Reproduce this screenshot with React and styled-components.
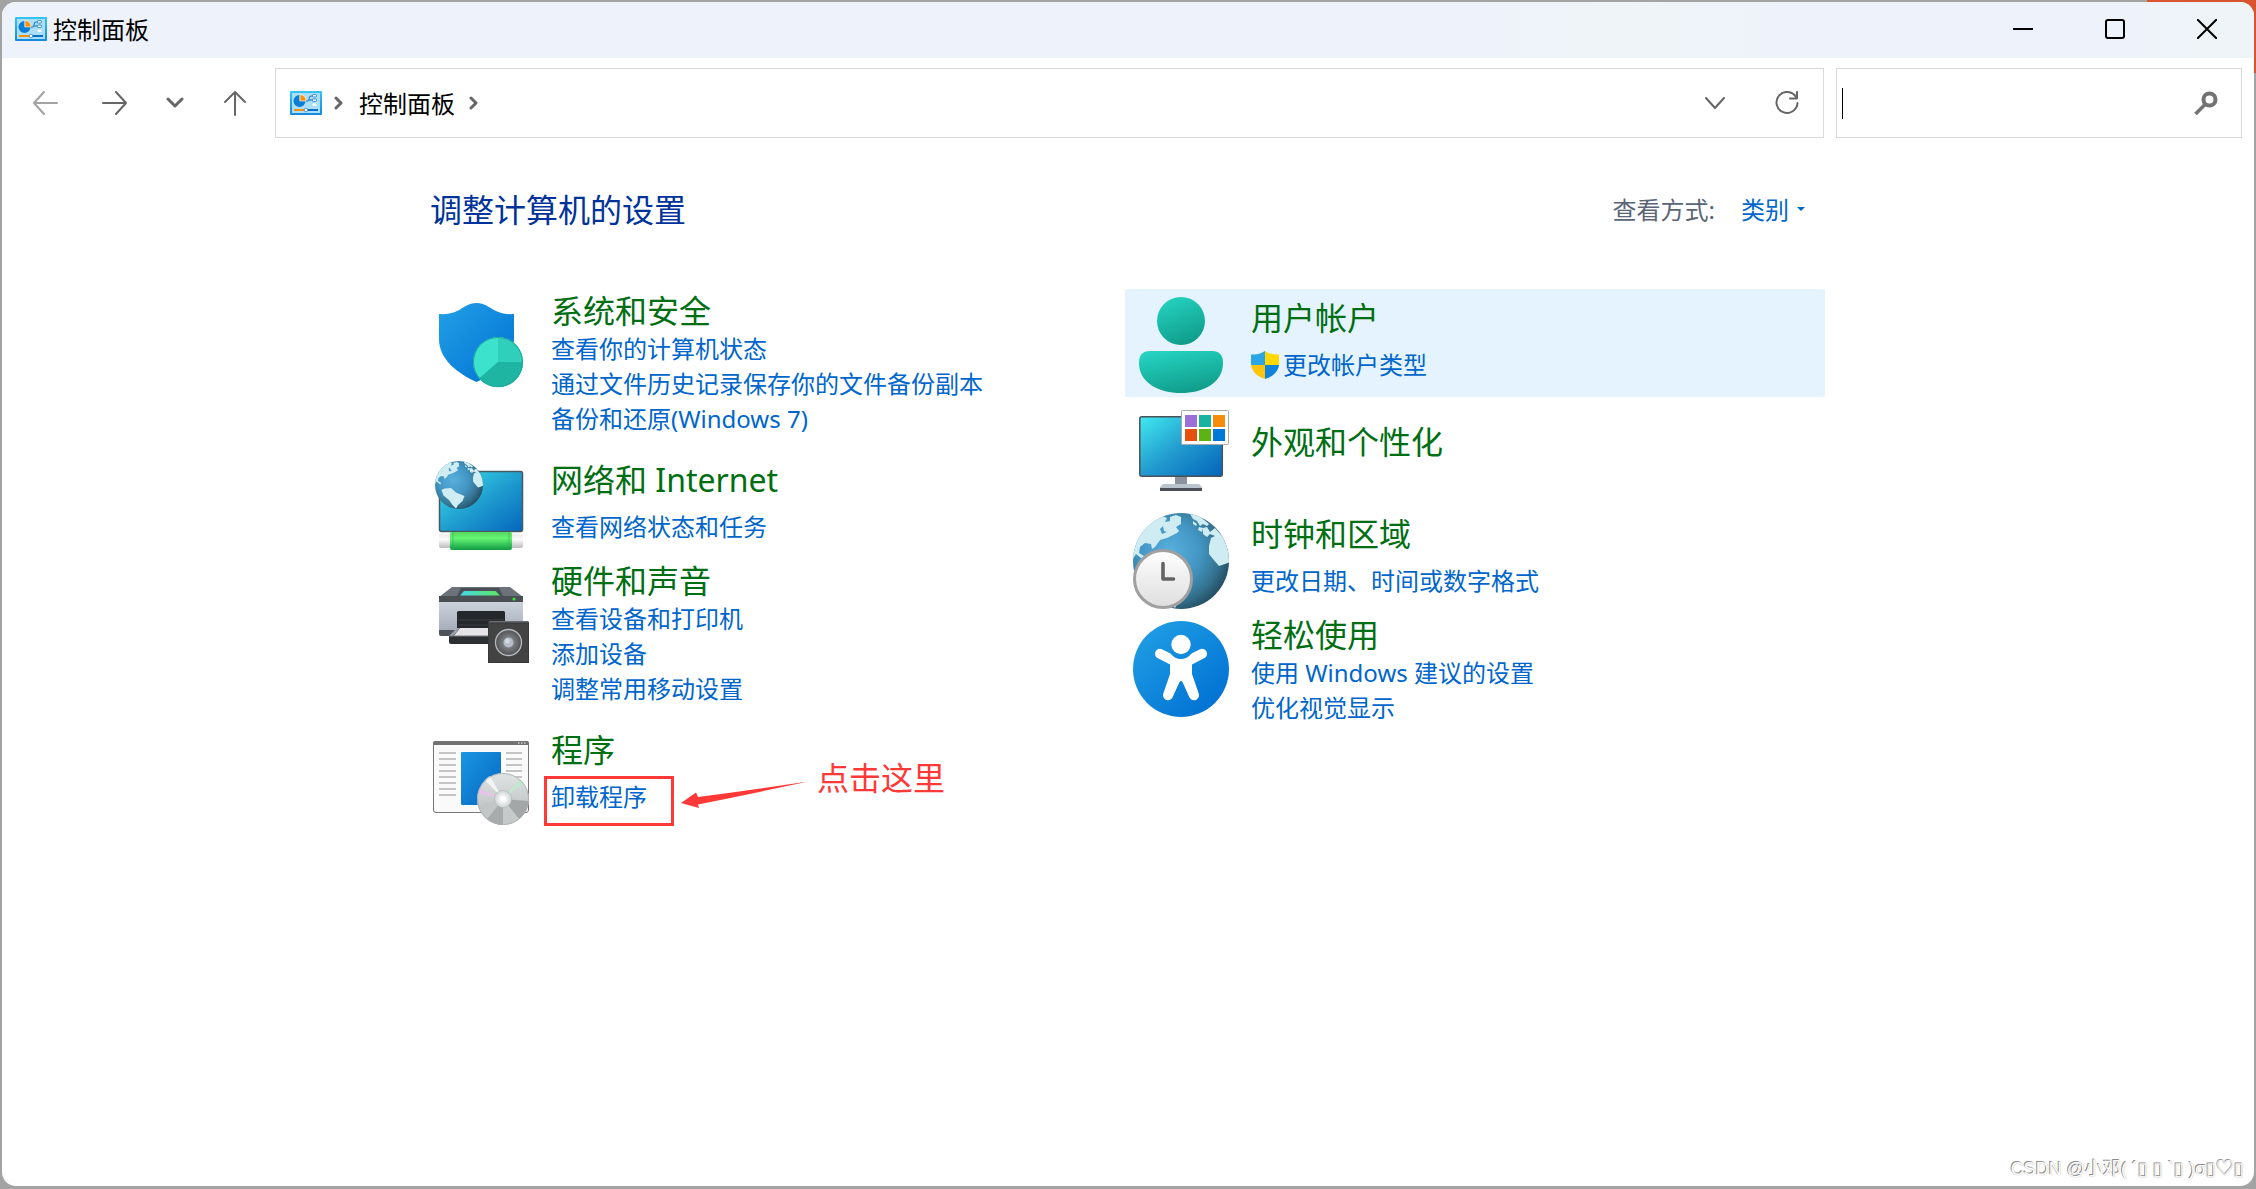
import styled, { createGlobalStyle } from "styled-components";

const GlobalStyle = createGlobalStyle`
  * {
    box-sizing: border-box;
  }

  body {
    margin: 0;
    font-family: "Noto Sans", "Noto Sans CJK SC", sans-serif;
    font-size: 24px;
    line-height: 35px;
    color: #000;
  }

  button,
  input,
  select {
    font: inherit;
    color: inherit;
    border: none;
    background: none;
    padding: 0;
    margin: 0;
    outline: none;
  }

  svg {
    display: block;
    flex: none;
  }
`;

const Desktop = styled.div`
  display: flex;
  min-height: 100vh;
  padding: 2px 2px 3px;
  background:
    linear-gradient(#d9542f, #d9542f) right top / 109px 73px no-repeat,
    #a3a3a3;
`;
const Window = styled.div`
  display: flex;
  flex: 1;
  flex-direction: column;
  overflow: hidden;
  min-width: 0;
  border-radius: 14px;
  background: #fff;
`;
const TitleBar = styled.header`
  display: flex;
  align-items: center;
  height: 56px;
  padding: 0 1px 2px 13px;
  background: linear-gradient(
    90deg,
    #eef3fb 0%,
    #eef3fb 65%,
    #eef4f7 72%,
    #eef3fb 80%,
    #eef3fb 94%,
    #eff4f7 100%
  );
`;
const WindowTitle = styled.h1`
  flex: 1;
  margin: 0 0 0 6px;
  font-size: 24px;
  font-weight: 400;
`;
const ControlButton = styled.button`
  display: flex;
  align-items: center;
  justify-content: center;
  width: 92px;
  height: 100%;
`;

const Toolbar = styled.nav`
  display: flex;
  align-items: stretch;
  padding: 10px 12px 10px 8px;
`;
const NavButton = styled.button`
  display: flex;
  align-items: center;
  justify-content: center;
  width: ${({ $narrow }) => ($narrow ? "50px" : "70px")};
  color: ${({ disabled }) => (disabled ? "#a3a3a3" : "#666")};
`;
const AddressBar = styled.div`
  display: flex;
  flex: 1;
  align-items: center;
  height: 70px;
  min-width: 0;
  margin: 0 12px 0 5px;
  padding-left: 14px;
  border: 1px solid #d9d9d9;
  color: #666;
`;
const AddressButton = styled(NavButton)`
  width: 72px;
  height: 100%;
`;
const Crumb = styled.a`
  margin: 0 14px 0 16px;
  color: #000;
  text-decoration: none;
`;
const CrumbIcon = styled.span`
  margin-right: 12px;
`;
const Spacer = styled.span`
  flex: 1;
`;
const SearchBox = styled.label`
  display: flex;
  align-items: center;
  width: 18vw;
  height: 70px;
  padding: 0 23px 0 5px;
  border: 1px solid #d9d9d9;
  color: #737373;
`;
const Caret = styled.span`
  width: 1px;
  height: 31px;
  background: #000;
`;
const SearchInput = styled.input`
  flex: 1;
  min-width: 0;
`;

const Main = styled.main`
  flex: 1;
  padding: 40px 6px 0 0;
`;
const Content = styled.div`
  max-width: 1400px;
  margin: 0 auto;
`;
const ContentHeader = styled.div`
  display: flex;
  align-items: center;
  justify-content: space-between;
  margin-bottom: 57px;
  padding: 0 20px 0 5px;
`;
const Heading = styled.h2`
  margin: 0;
  font-size: 32px;
  font-weight: 400;
  line-height: 44px;
  color: #003399;
`;
const ViewBy = styled.label`
  display: flex;
  align-items: center;
  padding-bottom: 2px;
  color: #5a6577;
`;
const SelectWrap = styled.span`
  display: flex;
  align-items: center;
  margin-left: 26px;
  color: #0066cc;
`;
const ViewSelect = styled.select`
  appearance: none;
  width: 56px;
  height: 35px;
`;

const Columns = styled.div`
  display: grid;
  grid-template-columns: 1fr 1fr;
`;
const Category = styled.section`
  display: flex;
  align-items: flex-start;
  gap: 22px;
  min-height: 108px;
  padding-left: 8px;
  border-radius: 2px;
  background: ${({ $active }) => ($active ? "#e5f3ff" : "transparent")};
`;
const CategoryIcon = styled.div`
  padding-top: 8px;
`;
const CategoryText = styled.div`
  padding: ${({ $layout }) =>
    ({ dense: "2px 0 15px", single: "9px 0 0", bare: "25px 0 0" })[$layout]};
`;
const CategoryTitle = styled.h3`
  margin: 0 0 ${({ $layout }) => ($layout === "single" ? "9px" : "0")};
  font-size: 32px;
  font-weight: 400;
  line-height: 40px;
`;
const TitleLink = styled.a`
  color: #006e12;
  text-decoration: none;
`;
const TaskList = styled.ul`
  margin: 0;
  padding: 0;
  list-style: none;
`;
const Task = styled.li`
  display: flex;
  position: relative;
  align-items: center;
  gap: 4px;
  width: max-content;
`;
const TaskLink = styled.a`
  color: #0066cc;
  text-decoration: none;
`;

const Highlight = styled.span`
  position: absolute;
  top: -3px;
  left: -7px;
  width: 130px;
  height: 50px;
  border: 3px solid #ff3838;
  pointer-events: none;
`;
const Callout = styled.span`
  display: flex;
  position: absolute;
  top: -23px;
  left: 130px;
  align-items: flex-start;
  gap: 8px;
  font-size: 32px;
  line-height: 44px;
  white-space: nowrap;
  color: #ff3838;
`;
const Watermark = styled.footer`
  align-self: flex-end;
  padding: 0 10px 3px 0;
  font-family: "Liberation Sans", "Noto Sans CJK SC", sans-serif;
  font-size: 18px;
  line-height: 28px;
  color: #fff;
  text-shadow:
    -1px -1px 0 #8c8c8c,
    0 0 1px #999;
`;

function PanelIcon() {
  return (
    <svg width="32" height="24" viewBox="0 0 32 24">
      <defs>
        <linearGradient id="panel" x1="0" y1="0" x2="0" y2="1">
          <stop offset="0" stopColor="#35c5f3" />
          <stop offset="1" stopColor="#1688dc" />
        </linearGradient>
      </defs>
      <rect width="32" height="24" rx="1" fill="url(#panel)" />
      <rect x="2" y="2" width="28" height="20" fill="#a9e0f8" />
      <path d="M9.500 4 A6 6 0 1 0 15.500 10 H9.500 Z" fill="#0a7dd6" />
      <path d="M10 3.500 A6 6 0 0 1 16 10 H10 Z" fill="#f7900a" stroke="#fff" strokeWidth="0.600" />
      <path d="M16 10 h2 q1 0 1-2 q0-3 2-3 h2 M19 9 h4" fill="none" stroke="#1072c4" strokeWidth="1" />
      <rect x="22.500" y="3.500" width="4" height="2.500" rx="1" fill="#fff" stroke="#1072c4" strokeWidth="0.800" />
      <rect x="22.500" y="8" width="4" height="2.500" rx="1" fill="#fff" stroke="#1072c4" strokeWidth="0.800" />
      <rect x="22.500" y="12.500" width="4" height="2.500" rx="1" fill="#fff" />
      <path d="M4 19 H15" stroke="#f7900a" strokeWidth="2" />
      <path d="M16 19 H28" stroke="#0a6fc9" strokeWidth="2" />
      <circle cx="16" cy="19" r="1.800" fill="#fff" stroke="#0a6fc9" strokeWidth="0.600" />
    </svg>
  );
}

// thin line icons of the title bar and toolbar
function LineIcon({ width = 24, height = 24, d, stroke = 2, cap = "round" }) {
  return (
    <svg
      width={width}
      height={height}
      viewBox={`0 0 ${width} ${height}`}
      fill="none"
      stroke="currentColor"
      strokeWidth={stroke}
      strokeLinecap={cap}
      strokeLinejoin="round"
    >
      <path d={d} />
    </svg>
  );
}

function Globe() {
  return (
    <>
      <defs>
        <radialGradient id="sea" cx="0.38" cy="0.4" r="0.7">
          <stop offset="0" stopColor="#58b0dc" />
          <stop offset="0.45" stopColor="#4396c4" />
          <stop offset="0.75" stopColor="#34728f" />
          <stop offset="1" stopColor="#1f4254" />
        </radialGradient>
        <clipPath id="globeClip">
          <circle cx="48" cy="48" r="48" />
        </clipPath>
      </defs>
      <circle cx="48" cy="48" r="48" fill="url(#sea)" />
      <g clipPath="url(#globeClip)" fill="#cfecf2">
        <path d="M0 40 L5 25 L13 14 L20 6 L25 5 L29 3 L34 5 L32 9 L37 8 L37 4 L43 2 L48 4 L48 11 L43 14 L46 18 L44 20 L38 23 L34 25 L27 27 L22 34 L19 36 L18 31 L12 30 L7 34 L6 40 L11 43 L12 47 L8 45 L3 41 L0 46 Z" />
        <path d="M27 16 L30 13 L31 18 L34 19 L29 21 Z" fill="#4a9dca" />
        <path d="M57 1 L66 2 L70 6 L76 11 L74 13 L70 11 L67 13 L64 8 L60 6 Z M70 15 L74 14 L77 19 L82 15 L90 24 L96 34 L100 48 L92 51 L86 53 L80 46 L76 41 L76 33 L78 25 L82 23 L77 21 L74 24 L70 21 Z" />
        <path d="M60 8 L64 11 L63 13 L60 11 Z M66 14 L70 15 L69 19 L65 17 Z" />
        <path d="M19 55 L32 54 L42 63 L59 70 L55 80 L46 88 L42 95 L35 88 L28 78 L17 69 L13 58 Z" />
      </g>
    </>
  );
}

function SecurityArt() {
  return (
    <>
      <defs>
        <linearGradient id="shield" x1="0" y1="0" x2="1" y2="1">
          <stop offset="0" stopColor="#22a1e6" />
          <stop offset="1" stopColor="#006fd3" />
        </linearGradient>
      </defs>
      <path
        d="M6 17 C18 18 25 14 31 10 Q43.500 2 56 10 C62 14 69 18 81 17 V42 C81 62 63 76 43.500 85 C24 76 6 62 6 42 Z"
        fill="url(#shield)"
      />
      <circle cx="65" cy="65" r="25" fill="#3ce2cb" />
      <path d="M65 65 V40 A25 25 0 0 1 90 65 Z" fill="#2fcfbb" />
      <path d="M65 65 H90 A25 25 0 0 1 46 81.500 Z" fill="#1eb5a3" />
      <circle cx="65" cy="65" r="24.500" fill="none" stroke="#21a99a" strokeWidth="1" />
    </>
  );
}

function NetworkArt() {
  return (
    <>
      <defs>
        <linearGradient id="screen" x1="0" y1="0" x2="1" y2="1">
          <stop offset="0" stopColor="#3be3ea" />
          <stop offset="0.5" stopColor="#209fd0" />
          <stop offset="1" stopColor="#0466bd" />
        </linearGradient>
        <linearGradient id="cable" x1="0" y1="0" x2="0" y2="1">
          <stop offset="0" stopColor="#55d95f" />
          <stop offset="0.35" stopColor="#66f572" />
          <stop offset="1" stopColor="#109a45" />
        </linearGradient>
        <linearGradient id="plug" x1="0" y1="0" x2="0" y2="1">
          <stop offset="0" stopColor="#ececec" />
          <stop offset="0.4" stopColor="#fafafa" />
          <stop offset="1" stopColor="#bdbdbd" />
        </linearGradient>
      </defs>
      <rect x="6.500" y="12.500" width="83" height="60" rx="2" fill="url(#screen)" stroke="#4a5862" strokeWidth="1.500" />
      <rect x="6" y="75" width="84" height="14" rx="2" fill="url(#plug)" />
      <rect x="17" y="73" width="62" height="18" rx="2" fill="url(#cable)" />
      <path d="M20 73 V91 M76 73 V91" stroke="#27b24b" strokeWidth="0.600" />
      <g transform="translate(2 2) scale(0.5)">
        <Globe />
      </g>
    </>
  );
}

function HardwareArt() {
  return (
    <>
      <defs>
        <linearGradient id="body" x1="0" y1="0" x2="0" y2="1">
          <stop offset="0" stopColor="#cdd3dc" />
          <stop offset="1" stopColor="#a6aeba" />
        </linearGradient>
        <linearGradient id="display" x1="0" y1="0" x2="1" y2="0">
          <stop offset="0" stopColor="#44d7e6" />
          <stop offset="1" stopColor="#5fe65f" />
        </linearGradient>
        <radialGradient id="cone">
          <stop offset="0.2" stopColor="#8a8c8e" />
          <stop offset="1" stopColor="#505254" />
        </radialGradient>
      </defs>
      <path d="M19 20 H77 L90 30 H6 Z" fill="#6b7279" />
      <path d="M28 21 H66 L70 29 H24 Z" fill="#4b5056" />
      <path d="M31 24 H62.500 L67 28.500 H27 Z" fill="url(#display)" />
      <rect x="6" y="29" width="84" height="6" fill="#4b4e52" />
      <circle cx="81" cy="32" r="1.600" fill="#2ee62e" />
      <rect x="6" y="35" width="84" height="28" fill="url(#body)" />
      <path d="M6 63 H90 V69 H8 Q6 69 6 67 Z" fill="#4f545b" />
      <rect x="24" y="44" width="48" height="22" rx="1.500" fill="#25282b" />
      <path d="M25 53 H71 M25 58 H71" stroke="#3d4145" strokeWidth="1" />
      <path d="M27 61 H62 V70 H20 Z" fill="#e6e4e6" />
      <path d="M27 61 L20 69 H16 L24 61 Z" fill="#9ca3ac" />
      <path d="M16 69 H60 V77 H18 Q16 77 16 75 Z" fill="#2c3033" />
      <path d="M16 69 H60" stroke="#767c83" strokeWidth="1" />
      <rect x="55" y="54" width="41" height="42" rx="1.500" fill="#434343" />
      <path d="M57 54 H94 L96 56 H55 Z" fill="#67696c" />
      <rect x="55.500" y="56" width="40" height="39.500" fill="none" stroke="#37393b" strokeWidth="1" />
      <circle cx="75.500" cy="75.500" r="13" fill="url(#cone)" stroke="#b5bac0" strokeWidth="1.300" />
      <circle cx="75.500" cy="75.500" r="5" fill="#b4bec9" />
      <circle cx="74.500" cy="74" r="2.500" fill="#cfd7df" />
    </>
  );
}

function ProgramsArt() {
  const lines = [24, 30, 36, 42, 48, 54, 60, 66];
  return (
    <>
      <defs>
        <linearGradient id="page" x1="0" y1="0" x2="1" y2="1">
          <stop offset="0" stopColor="#1a96e3" />
          <stop offset="1" stopColor="#0566c0" />
        </linearGradient>
        <linearGradient id="disc" x1="0" y1="0" x2="0" y2="1">
          <stop offset="0" stopColor="#dfe3e3" />
          <stop offset="1" stopColor="#b4b8b8" />
        </linearGradient>
      </defs>
      <rect x="0.500" y="12.500" width="95" height="71" rx="2.500" fill="#fafafa" stroke="#777" />
      <path d="M0 16 V14 Q0 12 2 12 H94 Q96 12 96 14 V16 Z" fill="#737373" />
      <path d="M85 14 h1.500 m1.500 0 h1.500 m1.500 0 h1.500" stroke="#fff" strokeWidth="1" />
      <rect x="28" y="23" width="40" height="53" rx="1" fill="url(#page)" />
      {lines.map((y) => (
        <path key={y} d={`M6 ${y} H23 M73 ${y} H89`} stroke="#8f8f8f" strokeWidth="1" />
      ))}
      <circle cx="70" cy="70" r="26" fill="url(#disc)" />
      <path d="M70 70 L96 72 A26 26 0 0 1 86 90 Z" fill="#a3a7a7" />
      <path d="M70 70 L86 90 A26 26 0 0 1 70 96 Z" fill="#c7caca" />
      <path d="M70 70 L54 90 A26 26 0 0 0 70 96 Z" fill="#a9acac" />
      <path d="M70 70 L54 90 A26 26 0 0 1 45 76 Z" fill="#c3c6c6" />
      <path d="M70 70 L45 64 A26 26 0 0 1 47 60 Z" fill="#e9c1ec" />
      <path d="M70 70 L87 50 A26 26 0 0 1 90 54 Z" fill="#bfe9cd" />
      <path d="M70 70 L52 51 A26 26 0 0 1 57 47 Z" fill="#f3f5f5" />
      <circle cx="70" cy="70" r="25.500" fill="none" stroke="#a9aeae" strokeWidth="0.800" />
      <circle cx="70" cy="70" r="8.500" fill="#d9dede" stroke="#b3b8b8" strokeWidth="0.800" />
      <circle cx="70" cy="70" r="5.500" fill="#eceeee" />
      <circle cx="70" cy="70" r="3" fill="#fff" />
    </>
  );
}

function UsersArt() {
  return (
    <>
      <defs>
        <linearGradient id="user" x1="0.3" y1="0" x2="0.7" y2="1">
          <stop offset="0" stopColor="#25d1bf" />
          <stop offset="1" stopColor="#0f9a88" />
        </linearGradient>
      </defs>
      <circle cx="48" cy="24" r="24" fill="url(#user)" />
      <path d="M17 54 H79 Q90 54 90 66 C90 86 70 96 48 96 C26 96 6 86 6 66 Q6 54 17 54 Z" fill="url(#user)" />
    </>
  );
}

function AppearanceArt() {
  const tiles = [
    [52, 10, "#9c6fd8"],
    [66, 10, "#1ab3a0"],
    [80, 10, "#f58d0b"],
    [52, 24, "#e55011"],
    [66, 24, "#5cb313"],
    [80, 24, "#0078d7"],
  ];
  return (
    <>
      <defs>
        <linearGradient id="monitor" x1="0" y1="0" x2="1" y2="1">
          <stop offset="0" stopColor="#40eaf0" />
          <stop offset="0.5" stopColor="#229bcf" />
          <stop offset="1" stopColor="#0264ba" />
        </linearGradient>
      </defs>
      <rect x="42" y="72" width="12" height="9" fill="#8a939d" />
      <path d="M30 79 H66 L69 82 V83 H27 V82 Z" fill="#b9c3cd" />
      <rect x="27" y="83" width="42" height="3" fill="#4c5056" />
      <rect x="6.800" y="11.800" width="82.500" height="59.500" rx="2" fill="url(#monitor)" stroke="#4a5158" strokeWidth="1.500" />
      <rect x="48.500" y="5.500" width="47" height="34" rx="1" fill="#fff" stroke="#aaa" />
      {tiles.map(([x, y, fill]) => (
        <rect key={fill} x={x} y={y} width="12" height="12" fill={fill} />
      ))}
    </>
  );
}

function ClockArt() {
  return (
    <>
      <defs>
        <linearGradient id="dial" x1="0" y1="0" x2="0" y2="1">
          <stop offset="0" stopColor="#fff" />
          <stop offset="1" stopColor="#dedede" />
        </linearGradient>
      </defs>
      <Globe />
      <circle cx="30" cy="66" r="28.500" fill="url(#dial)" stroke="#a0a0a0" strokeWidth="3" />
      <path d="M30 50.500 V66 H40.500" fill="none" stroke="#636363" strokeWidth="3.600" strokeLinecap="round" strokeLinejoin="round" />
    </>
  );
}

function EaseArt() {
  return (
    <>
      <defs>
        <linearGradient id="ease" x1="0.1" y1="0.1" x2="0.8" y2="0.9">
          <stop offset="0" stopColor="#1f9de4" />
          <stop offset="1" stopColor="#0273d4" />
        </linearGradient>
      </defs>
      <circle cx="48" cy="48" r="48" fill="url(#ease)" />
      <circle cx="48" cy="23.500" r="9.700" fill="#fff" />
      <path
        d="M29 28.300 L37.500 32.500 Q42 38 48 38 Q54 38 58.500 32.500 L67 28.300 A4.900 4.900 0 0 1 71.500 37 L59 43.500 V53 L65.500 72 A5 5 0 0 1 56.500 76.500 L49.500 61 Q48 59 46.500 61 L39.500 76.500 A5 5 0 0 1 30.500 72 L37 53 V43.500 L24.500 37 A4.900 4.900 0 0 1 29 28.300 Z"
        fill="#fff"
      />
    </>
  );
}

function AdminShield() {
  return (
    <svg width="28" height="28" viewBox="0 0 28 28">
      <path d="M14 0 C10 3 5 3.500 0 3.500 V14 H14 Z" fill="#2aa6e4" />
      <path d="M14 0 C18 3 23 3.500 28 3.500 V14 H14 Z" fill="#ffd800" />
      <path d="M0 14 C1 21 7 26 14 28 V14 Z" fill="#fcc50b" />
      <path d="M28 14 C27 21 21 26 14 28 V14 Z" fill="#0f83dc" />
    </svg>
  );
}

function Arrow() {
  return (
    <svg width="128" height="60" viewBox="0 0 128 60">
      <path d="M0 47 L15 36.500 L17 41 Q70 34 127 25.500 Q72 37.500 17 48.500 L18 52 Z" fill="#ff3838" />
    </svg>
  );
}

const columns = [
  [
    {
      title: "系统和安全",
      Art: SecurityArt,
      layout: "dense",
      tasks: [
        { label: "查看你的计算机状态" },
        { label: "通过文件历史记录保存你的文件备份副本" },
        { label: "备份和还原(Windows 7)" },
      ],
    },
    {
      title: "网络和 Internet",
      Art: NetworkArt,
      layout: "single",
      tasks: [{ label: "查看网络状态和任务" }],
    },
    {
      title: "硬件和声音",
      Art: HardwareArt,
      layout: "dense",
      tasks: [
        { label: "查看设备和打印机" },
        { label: "添加设备" },
        { label: "调整常用移动设置" },
      ],
    },
    {
      title: "程序",
      Art: ProgramsArt,
      layout: "single",
      tasks: [{ label: "卸载程序", callout: "点击这里" }],
    },
  ],
  [
    {
      title: "用户帐户",
      Art: UsersArt,
      layout: "single",
      active: true,
      tasks: [{ label: "更改帐户类型", admin: true }],
    },
    { title: "外观和个性化", Art: AppearanceArt, layout: "bare", tasks: [] },
    {
      title: "时钟和区域",
      Art: ClockArt,
      layout: "single",
      tasks: [{ label: "更改日期、时间或数字格式" }],
    },
    {
      title: "轻松使用",
      Art: EaseArt,
      layout: "dense",
      tasks: [{ label: "使用 Windows 建议的设置" }, { label: "优化视觉显示" }],
    },
  ],
];

function CategoryItem({ title, Art, layout, active, tasks }) {
  return (
    <Category $active={active}>
      <CategoryIcon>
        <svg width="96" height="96" viewBox="0 0 96 96">
          <Art />
        </svg>
      </CategoryIcon>
      <CategoryText $layout={layout}>
        <CategoryTitle $layout={layout}>
          <TitleLink href="#">{title}</TitleLink>
        </CategoryTitle>
        <TaskList>
          {tasks.map(({ label, admin, callout }) => (
            <Task key={label}>
              {admin && <AdminShield />}
              <TaskLink href="#">{label}</TaskLink>
              {callout && (
                <>
                  <Highlight />
                  <Callout>
                    <Arrow />
                    {callout}
                  </Callout>
                </>
              )}
            </Task>
          ))}
        </TaskList>
      </CategoryText>
    </Category>
  );
}

export default function App() {
  return (
    <Desktop>
      <GlobalStyle />
      <Window>
        <TitleBar>
          <PanelIcon />
          <WindowTitle>控制面板</WindowTitle>
          <ControlButton aria-label="最小化">
            <LineIcon width={20} height={20} d="M0 10 H20" cap="butt" />
          </ControlButton>
          <ControlButton aria-label="最大化">
            <LineIcon width={20} height={20} d="M3 1 H17 Q19 1 19 3 V17 Q19 19 17 19 H3 Q1 19 1 17 V3 Q1 1 3 1 Z" />
          </ControlButton>
          <ControlButton aria-label="关闭">
            <LineIcon width={20} height={20} d="M0 0 L20 20 M20 0 L0 20" cap="butt" />
          </ControlButton>
        </TitleBar>

        <Toolbar>
          <NavButton aria-label="后退" disabled>
            <LineIcon width={26} height={24} d="M25 12 H2 M12 1 L2 12 L12 23" />
          </NavButton>
          <NavButton aria-label="前进">
            <LineIcon width={26} height={24} d="M1 12 H24 M14 1 L24 12 L14 23" />
          </NavButton>
          <NavButton aria-label="最近浏览的位置" $narrow>
            <LineIcon width={18} height={12} d="M2 2 L9 9 L16 2" stroke={3} />
          </NavButton>
          <NavButton aria-label="向上">
            <LineIcon width={24} height={26} d="M12 25 V2 M2 12 L12 2 L22 12" />
          </NavButton>

          <AddressBar>
            <CrumbIcon>
              <PanelIcon />
            </CrumbIcon>
            <LineIcon width={9} height={14} d="M2 2 L7 7 L2 12" stroke={3} />
            <Crumb href="#">控制面板</Crumb>
            <LineIcon width={9} height={14} d="M2 2 L7 7 L2 12" stroke={3} />
            <Spacer />
            <AddressButton aria-label="以前的位置">
              <LineIcon width={20} height={12} d="M1 1 L10 11 L19 1" />
            </AddressButton>
            <AddressButton aria-label="刷新">
              <LineIcon d="M21 6 A10.500 10.500 0 1 0 22.500 12 M22 1 V7.500 H15" />
            </AddressButton>
          </AddressBar>

          <SearchBox>
            <Caret />
            <SearchInput type="text" aria-label="搜索控制面板" />
            <svg width="24" height="24" viewBox="0 0 24 24" fill="none" stroke="currentColor">
              <circle cx="15.500" cy="8.500" r="6" strokeWidth="4" />
              <path d="M11.500 13 L1.500 23" strokeWidth="3.500" />
            </svg>
          </SearchBox>
        </Toolbar>

        <Main>
          <Content>
            <ContentHeader>
              <Heading>调整计算机的设置</Heading>
              <ViewBy>
                查看方式:
                <SelectWrap>
                  <ViewSelect defaultValue="类别">
                    <option>类别</option>
                  </ViewSelect>
                  <svg width="8" height="4" viewBox="0 0 8 4">
                    <path d="M0 0 H8 L4 4 Z" fill="currentColor" />
                  </svg>
                </SelectWrap>
              </ViewBy>
            </ContentHeader>

            <Columns>
              {columns.map((items, i) => (
                <div key={i}>
                  {items.map((item) => (
                    <CategoryItem key={item.title} {...item} />
                  ))}
                </div>
              ))}
            </Columns>
          </Content>
        </Main>

        <Watermark>CSDN @小邓( ´▯ ▯ `▯ )σ▯♡▯</Watermark>
      </Window>
    </Desktop>
  );
}
